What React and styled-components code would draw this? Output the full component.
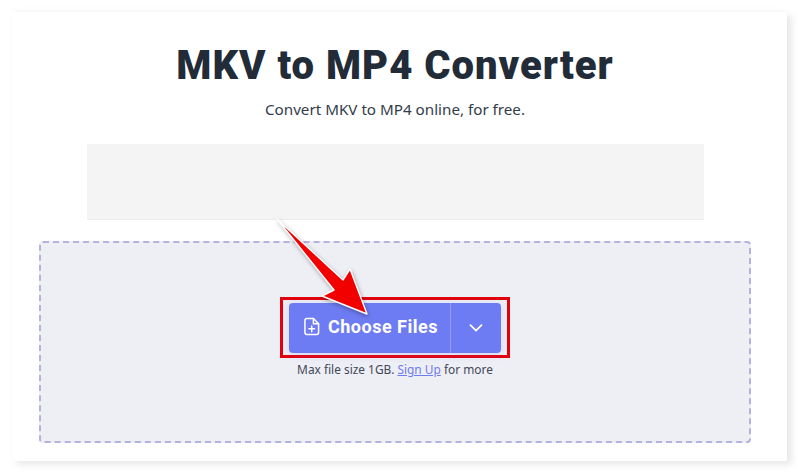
import React from "react";
import styled, { createGlobalStyle } from "styled-components";

const Global = createGlobalStyle`
  html, body { margin: 0; padding: 0; background: #fff; overflow: hidden; }
  body { font-family: "Noto Sans", "Open Sans", sans-serif; }
`;

const Page = styled.div`
  position: relative;
  width: 800px;
  height: 474px;
  padding: 12px 13px 13px 12px;
  box-sizing: border-box;
`;

const Card = styled.main`
  height: 449px;
  box-sizing: border-box;
  padding: 0 36px 0 27px;
  background: #fff;
  box-shadow: 5px 4px 7px rgba(0, 0, 0, 0.09), 0 -3px 5px rgba(0, 0, 0, 0.025);
  display: flex;
  flex-direction: column;
  align-items: center;
`;

const Title = styled.h1`
  margin: 28px 0 0;
  font-family: "Roboto", sans-serif;
  font-weight: 900;
  font-size: 40px;
  line-height: 52px;
  letter-spacing: 1px;
  color: #222b38;
  white-space: nowrap;
`;

const Subtitle = styled.p`
  margin: 6px 0 0;
  font-size: 15.2px;
  line-height: 22px;
  color: #333d4b;
`;

const AdSlot = styled.div`
  width: 617px;
  height: 76px;
  margin-top: 24px;
  background: #f4f4f4;
  border-bottom: 1px solid #ececec;
  box-sizing: border-box;
`;

const DropZone = styled.section`
  width: 712px;
  height: 202px;
  margin-top: 21px;
  box-sizing: border-box;
  background: #eeeef5;
  border: 2px dashed #b5b2dd;
  border-radius: 4px;
  display: flex;
  flex-direction: column;
  align-items: center;
  padding-top: 54px;
`;

const Highlight = styled.div`
  width: 230px;
  height: 61px;
  box-sizing: border-box;
  border: 3px solid #e2000b;
  padding: 3px 6px 2px;
  display: flex;
`;

const SplitButton = styled.div`
  flex: 1;
  display: flex;
  background: #6e7cf3;
  border-radius: 4px;
  color: #fff;
  box-shadow: 0 2px 8px rgba(110, 124, 243, 0.2);
`;

const MainAction = styled.div`
  width: 162px;
  box-sizing: border-box;
  padding: 0 0 4px 3px;
  display: flex;
  align-items: center;
  justify-content: center;
  gap: 8px;
  border-right: 1px solid #929df0;
  font-family: "Roboto", sans-serif;
  font-weight: 700;
  font-size: 18px;
  letter-spacing: 0.5px;
`;

const Caret = styled.div`
  flex: 1;
  display: flex;
  align-items: center;
  justify-content: center;
`;

const Note = styled.p`
  margin: 2px 0 0;
  font-size: 11.9px;
  line-height: 18px;
  color: #3f4857;
`;

const NoteLink = styled.a`
  color: #6e7cf3;
  text-decoration: underline;
`;

const Arrow = styled.svg`
  position: absolute;
  left: 270px;
  top: 212px;
  width: 110px;
  height: 110px;
  overflow: visible;
  filter: drop-shadow(1px 2px 2px rgba(0, 0, 0, 0.3));
`;

export default function App() {
  return (
    <Page>
      <Global />
      <Card>
        <Title>MKV to MP4 Converter</Title>
        <Subtitle>Convert MKV to MP4 online, for free.</Subtitle>
        <AdSlot />
        <DropZone>
          <Highlight>
            <SplitButton>
              <MainAction>
                <svg width="16" height="19" viewBox="0 0 17 19" fill="none" stroke="#fff" strokeWidth="1.6" strokeLinejoin="round" strokeLinecap="round">
                  <path d="M3 1h7l5.5 5.5V16a2 2 0 0 1-2 2H3a2 2 0 0 1-2-2V3a2 2 0 0 1 2-2z" />
                  <path d="M10 1v5.5h5.5" />
                  <path d="M8.2 9v6M5.2 12h6" />
                </svg>
                Choose Files
              </MainAction>
              <Caret>
                <svg width="14" height="8" viewBox="0 0 14 8" fill="none" stroke="#fff" strokeWidth="1.7" strokeLinecap="round" strokeLinejoin="round">
                  <path d="M1.5 1.2 7 6.6l5.5-5.4" />
                </svg>
              </Caret>
            </SplitButton>
          </Highlight>
          <Note>
            Max file size 1GB. <NoteLink href="#">Sign Up</NoteLink> for more
          </Note>
        </DropZone>
      </Card>
      <Arrow viewBox="0 0 110 110">
        <path
          d="M7 7 L73 68 L80 57 L97 102 L52 84 L64 78 Z"
          fill="#f20000"
          stroke="#fff"
          strokeWidth="1.4"
          strokeLinejoin="round"
        />
      </Arrow>
    </Page>
  );
}
